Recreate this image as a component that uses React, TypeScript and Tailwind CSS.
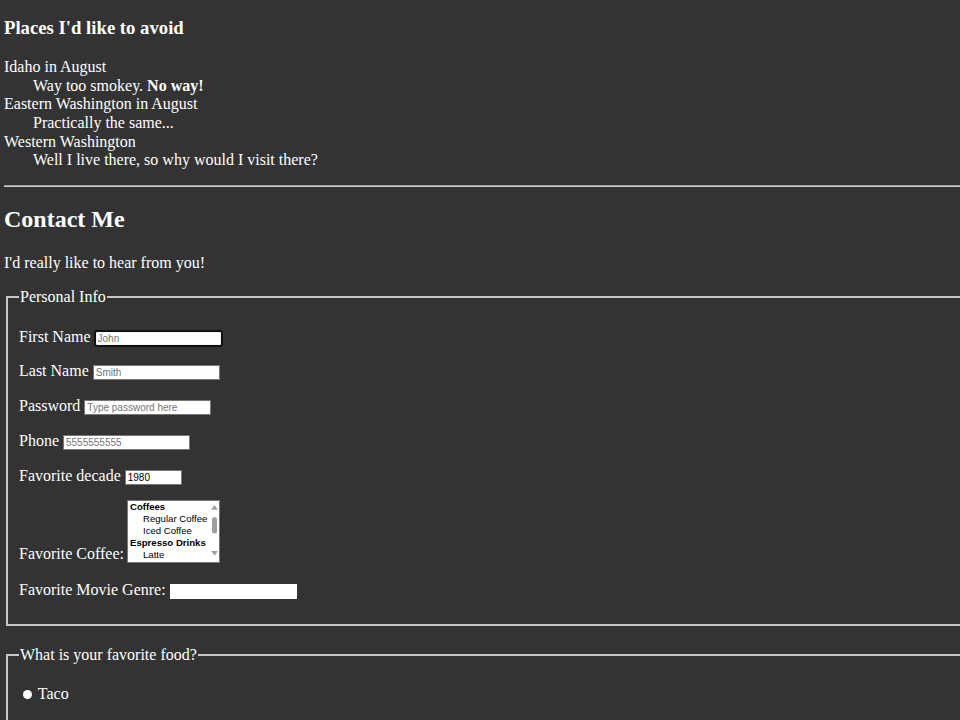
import React from "react";

const serif = "font-['Liberation_Serif','Times_New_Roman',serif]";
const inputBase =
  "h-[15px] border bg-white px-[2px] py-0 font-['Liberation_Sans',Arial,sans-serif] text-[10px] leading-[11px] text-black placeholder:text-[#757575] outline-none";

function Row({ label, className = "", children }: { label: string; className?: string; children: React.ReactNode }) {
  return (
    <div className={`flex h-[18.6px] items-baseline gap-[4px] whitespace-nowrap ${className}`}>
      <span>{label}</span>
      {children}
    </div>
  );
}

function CoffeeList() {
  const opt = "whitespace-nowrap";
  return (
    <div className="flex h-[63px] w-[93px] border border-[#767676] bg-white font-['Liberation_Sans',Arial,sans-serif] text-[9.6px] leading-[12.1px] text-black">
      <div className="flex-1 overflow-hidden">
        <div className={`${opt} pl-[2px] font-bold`}>Coffees</div>
        <div className={`${opt} pl-[15px]`}>Regular Coffee</div>
        <div className={`${opt} pl-[15px]`}>Iced Coffee</div>
        <div className={`${opt} pl-[2px] font-bold`}>Espresso Drinks</div>
        <div className={`${opt} pl-[15px]`}>Latte</div>
      </div>
      <svg width="9" height="61" viewBox="0 0 9 61" className="shrink-0">
        <polygon points="4.5,4 1.2,8.7 7.8,8.7" fill="#a0a0a0" />
        <rect x="2" y="16" width="5" height="16.5" rx="2.5" fill="#a0a0a0" />
        <polygon points="1.2,50 7.8,50 4.5,54.7" fill="#a0a0a0" />
      </svg>
    </div>
  );
}

export default function App() {
  return (
    <div className={`h-[720px] w-[960px] overflow-hidden bg-[#333333] text-white ${serif}`}>
      <div className="w-[1000px] pl-[4px] text-[16px] leading-[18.6px]">
        <h3 className="pt-[17px] text-[18.72px] font-bold leading-[22px]">Places I'd like to avoid</h3>
        <dl className="mt-[19.2px]">
          <dt>Idaho in August</dt>
          <dd className="ml-[29px]">
            Way too smokey. <strong className="font-bold">No way!</strong>
          </dd>
          <dt>Eastern Washington in August</dt>
          <dd className="ml-[29px]">Practically the same...</dd>
          <dt>Western Washington</dt>
          <dd className="ml-[29px]">Well I live there, so why would I visit there?</dd>
        </dl>
        <hr className="mt-[15.2px] h-0 border-t border-b border-t-[#9c9c9c] border-b-[#cdcdcd]" />
        <h2 className="mt-[17.7px] text-[24px] font-bold leading-[28px]">Contact Me</h2>
        <p className="mt-[21.5px]">I'd really like to hear from you!</p>

        <fieldset className="mx-[2px] mt-[15.4px] border-2 border-[#c8c8c8] pb-[25.2px] pl-[11px] pt-[21.4px]">
          <legend className="px-[1px] leading-[18.6px]">Personal Info</legend>
          <div className="flex flex-col">
            <Row label="First Name">
              <input
                className={`${inputBase} w-[127px] rounded-[2px] border-[#101010] shadow-[0_0_0_1px_#101010,inset_0_0_0_1px_#f4f4f4]`}
                placeholder="John"
              />
            </Row>
            <Row label="Last Name" className="mt-[15.8px]">
              <input className={`${inputBase} w-[127px] border-[#767676]`} placeholder="Smith" />
            </Row>
            <Row label="Password" className="mt-[15.8px]">
              <input className={`${inputBase} w-[127px] border-[#767676]`} type="password" placeholder="Type password here" />
            </Row>
            <Row label="Phone" className="mt-[16.3px]">
              <input className={`${inputBase} w-[127px] border-[#767676]`} placeholder="5555555555" />
            </Row>
            <Row label="Favorite decade" className="mt-[16.3px]">
              <input className={`${inputBase} w-[57px] border-[#767676]`} defaultValue="1980" />
            </Row>
            <div className="mt-[14.4px] flex items-end gap-[3px] whitespace-nowrap">
              <span className="relative top-[1px]">Favorite Coffee:</span>
              <CoffeeList />
            </div>
            <Row label="Favorite Movie Genre:" className="mt-[18px]">
              <input className={`${inputBase} h-[14px] w-[127px] border-white`} />
            </Row>
          </div>
        </fieldset>

        <fieldset className="mx-[2px] mt-[19.4px] border-2 border-[#c8c8c8] pb-[20px] pl-[11px] pt-[20.7px]">
          <legend className="px-[1px] leading-[18.6px]">What is your favorite food?</legend>
          <label className="flex h-[18.6px] items-center">
            <input
              type="radio"
              name="food"
              className="m-0 ml-[4.3px] mr-[5.5px] h-[9px] w-[9px] appearance-none rounded-full bg-white"
            />
            <span>Taco</span>
          </label>
        </fieldset>
      </div>
    </div>
  );
}
